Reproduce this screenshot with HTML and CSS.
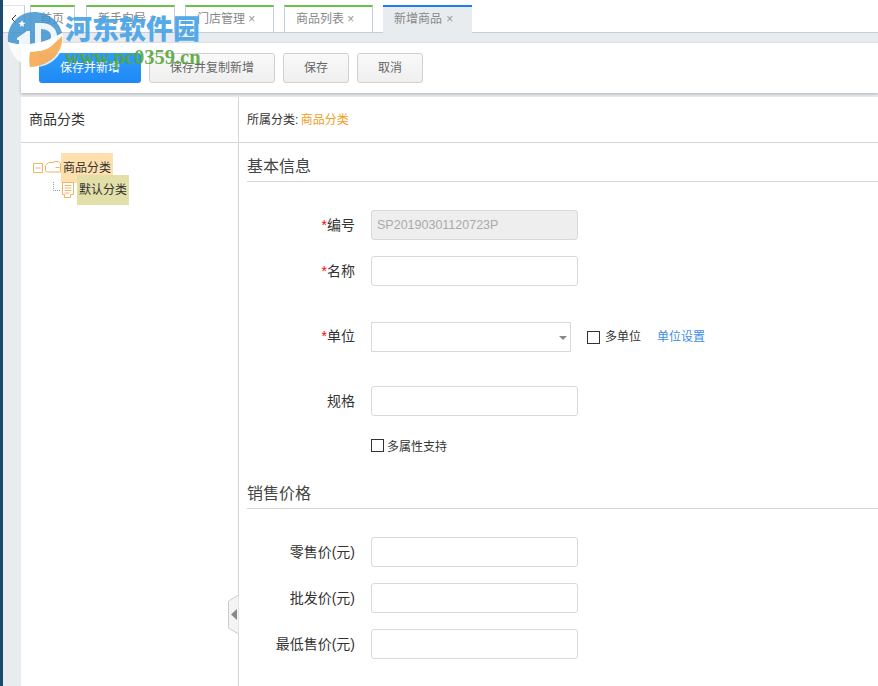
FILE: index.html
```html
<!DOCTYPE html>
<html lang="zh-CN">
<head>
    <meta charset="UTF-8">
    <title>新增商品</title>
    <link rel="stylesheet" href="styles.css">
</head>
<body>
    <div class="side-strip"></div>
    <div class="main">
        <div class="tabbar">
            <div class="tab-back">
                <svg width="6" height="10" viewBox="0 0 6 10"><path d="M5 1 1 5l4 4" fill="none" stroke="#333"/></svg>
            </div>
            <div class="tab tab-home">首页</div>
            <div class="tab tab-first">新手向导 <span class="tab-x">×</span></div>
            <div class="tab">门店管理 <span class="tab-x">×</span></div>
            <div class="tab">商品列表 <span class="tab-x">×</span></div>
            <div class="tab tab-active">新增商品 <span class="tab-x">×</span></div>
        </div>
        <div class="toolbar">
            <button class="btn btn-primary">保存并新增</button>
            <button class="btn btn-wide">保存并复制新增</button>
            <button class="btn btn-small">保存</button>
            <button class="btn btn-small">取消</button>
        </div>
        <div class="content">
            <div class="tree-panel">
                <div class="tree-head">商品分类</div>
                <div class="tree">
                    <div class="tree-row">
                        <svg class="tree-toggle" width="10" height="10" viewBox="0 0 10 10"><path d="M.5.5h9v9h-9zM2.500 5h5" fill="none" stroke="#f0b468"/></svg>
                        <svg class="tree-folder" width="16" height="12" viewBox="0 0 16 12"><path d="M.5 4.500 3.500 1.500H8L10 .5H13.500L15.500 2.500V11H2.500Q.5 11 .5 9ZM10.500 6.500h4" fill="none" stroke="#f0b468"/></svg>
                        <span class="tree-label tree-label-parent">商品分类</span>
                    </div>
                    <div class="tree-row tree-row-child">
                        <svg class="tree-dots" width="8" height="9" viewBox="0 0 8 9"><path d="M.5 0v8.500H8" fill="none" stroke="#999" stroke-dasharray="1 1"/></svg>
                        <svg class="tree-doc" width="12" height="16" viewBox="0 0 12 16"><path d="M.5.5h11v12h-3v3h-6v-3h-2zM2.500 3.500h7M2.500 6h7M2.500 8.500h7M2.500 11h5" fill="none" stroke="#f0b468"/></svg>
                        <span class="tree-label tree-label-child">默认分类</span>
                    </div>
                </div>
            </div>
            <div class="form-panel">
                <div class="crumb">所属分类: <span class="crumb-link">商品分类</span></div>
                <div class="form-body">
                    <h3 class="section-title">基本信息</h3>
                    <div class="form-row row-code">
                        <label class="form-label"><i>*</i>编号</label>
                        <div class="input input-disabled">SP20190301120723P</div>
                    </div>
                    <div class="form-row row-name">
                        <label class="form-label"><i>*</i>名称</label>
                        <div class="input"></div>
                    </div>
                    <div class="form-row row-unit">
                        <label class="form-label"><i>*</i>单位</label>
                        <div class="select"><span class="select-arrow"></span></div>
                        <span class="check"></span>
                        <span class="check-text">多单位</span>
                        <a class="unit-link">单位设置</a>
                    </div>
                    <div class="form-row row-spec">
                        <label class="form-label">规格</label>
                        <div class="input"></div>
                    </div>
                    <div class="form-row row-attr">
                        <span class="check"></span>
                        <span class="check-text check-text-small">多属性支持</span>
                    </div>
                    <h3 class="section-title section-price">销售价格</h3>
                    <div class="form-row row-retail">
                        <label class="form-label">零售价(元)</label>
                        <div class="input"></div>
                    </div>
                    <div class="form-row row-price">
                        <label class="form-label">批发价(元)</label>
                        <div class="input"></div>
                    </div>
                    <div class="form-row row-price">
                        <label class="form-label">最低售价(元)</label>
                        <div class="input"></div>
                    </div>
                </div>
            </div>
            <svg class="collapse" width="11" height="42" viewBox="0 0 11 42"><path d="M10.500 1 .5 7v27l10 6" fill="#f4f4f4" stroke="#ccc"/><path d="M9 15v11l-6-5.500z" fill="#888"/></svg>
        </div>
    </div>

    <!-- site watermark over the top left corner -->
    <div class="watermark">
        <svg class="wm-logo" width="70" height="70" viewBox="0 0 70 70">
            <path d="M8 42C6 25 19 12 34 12c14 0 25 9 28 21C48 42 25 48 8 42z" fill="#3f94d0" opacity=".85"/>
            <path d="M8 42c17 6 40 0 54-9 1 3 1 5 1 8 0 14-12 26-28 26C21 67 11 56 8 42z" fill="#fff" opacity=".8"/>
            <path d="M62 36c2 14-10 30-32 31-1-4-1-10 0-15C43 52 54 45 62 36z" fill="#f5a852" opacity=".9"/>
            <path d="M17 38 27 31h3v16H19v-7l-2 0z" fill="#fff" opacity=".9"/>
            <path d="M35 23h6c10 0 16 6 16 13 0 8-8 13-16 15h-6zM41 29v16c6-1 10-4 10-9 0-4-4-7-10-7z" fill="#fff" fill-rule="evenodd" opacity=".9"/>
            <path d="m22 20 1 2.500 2.500.5-2 1.500.5 2.500-2-1.500-2 1.500.5-2.500-2-1.500 2.500-.5z" fill="#fff"/>
        </svg>
        <div class="wm-name">河东软件园</div>
        <div class="wm-url">www.pc0359.cn</div>
    </div>
</body>
</html>
```
FILE: styles.css
```css
* {
    box-sizing: border-box;
}
html, body {
    height: 100%;
}
body {
    margin: 0;
    display: flex;
    height: 686px;
    overflow: hidden;
    font-family: "Liberation Sans", "Noto Sans CJK SC", sans-serif;
    font-size: 14px;
    color: #333;
    background-color: #fff;
}
.side-strip {
    width: 3px;
    background-color: #1b4b6f;
    flex-shrink: 0;
}
.main {
    flex: 1;
    min-width: 0;
    display: flex;
    flex-direction: column;
    background-color: #e8ecef;
}
.tabbar {
    height: 33px;
    display: flex;
    align-items: flex-end;
    background-color: #fff;
    border-bottom: 1px solid #c3cddd;
}
.tab-back {
    width: 22px;
    height: 27px;
    margin-right: 5px;
    display: flex;
    align-items: center;
    justify-content: center;
    border-right: 1px solid #c3cddd;
    border-top: 1px solid #dfe3ea;
}
.tab {
    width: 89px;
    height: 27px;
    margin-right: 10px;
    padding-left: 11px;
    border: 1px solid #c3cddd;
    border-top: 2px solid #6cbf4b;
    border-bottom: none;
    font-size: 12px;
    line-height: 24px;
    color: #888;
    background-color: #fff;
}
.tab-home {
    width: 45px;
    margin-right: 11px;
    padding-left: 9px;
}
.tab-active {
    border: none;
    border-top: 2px solid #1e80f0;
    height: 28px;
    margin-bottom: -1px;
    padding-left: 11px;
    background-color: #e8ecef;
}
.tab-x {
    color: #999;
}
.tab-active .tab-x {
    margin-left: 1px;
}
.toolbar {
    margin: 10px 0 0 18px;
    height: 50px;
    padding: 10px 0 0 18px;
    display: flex;
    gap: 8px;
    background-color: #fff;
    box-shadow: 0 1px 3px rgba(0, 0, 0, 0.25);
}
.btn {
    height: 30px;
    width: 66px;
    padding: 0 0 3px;
    border: 1px solid #d0d0d0;
    border-radius: 3px;
    font-family: inherit;
    font-size: 12px;
    color: #666;
    background: linear-gradient(#f9f9f9, #efefef);
}
.btn-primary {
    width: 102px;
    border: none;
    color: #fff;
    background: linear-gradient(#2e9dfb, #1e88f5);
}
.btn-wide {
    width: 126px;
}
.content {
    position: relative;
    flex: 1;
    margin: 4px 0 0 18px;
    display: flex;
    background-color: #fff;
}
.tree-panel {
    width: 218px;
    border-right: 1px solid #d6d6d6;
    flex-shrink: 0;
}
.tree-head {
    height: 46px;
    padding: 0 0 0 8px;
    border-bottom: 1px solid #d6d6d6;
    line-height: 45px;
    color: #333;
}
.tree {
    padding: 14px 0 0 12px;
}
.tree-row {
    height: 22px;
    display: flex;
    align-items: center;
}
.tree-toggle {
    flex-shrink: 0;
}
.tree-folder {
    margin: -2px 0 0 2px;
}
.tree-label {
    height: 30px;
    padding: 0 2px;
    font-size: 12px;
    line-height: 30px;
    color: #333;
}
.tree-label-parent {
    background-color: #fedfae;
}
.tree-label-child {
    position: relative;
    background-color: #e3dfa9;
}
.tree-row-child {
    padding-left: 20px;
}
.tree-dots {
    margin-bottom: 7px;
    flex-shrink: 0;
}
.tree-doc {
    margin: 0 3px 0 1px;
    flex-shrink: 0;
}
.form-panel {
    flex: 1;
    min-width: 0;
}
.crumb {
    height: 46px;
    padding-left: 8px;
    border-bottom: 1px solid #d6d6d6;
    font-size: 12px;
    line-height: 47px;
}
.crumb-link {
    margin-left: -1px;
    color: #f0a020;
}
.form-body {
    padding-left: 8px;
}
.section-title {
    margin: 0;
    height: 39px;
    padding-top: 12px;
    border-bottom: 1px solid #d6d6d6;
    font-size: 16px;
    font-weight: normal;
    line-height: 23px;
    color: #444;
}
.form-row {
    height: 30px;
    display: flex;
    align-items: center;
}
.form-label {
    width: 108px;
    margin-right: 16px;
    padding-bottom: 2px;
    text-align: right;
    color: #333;
}
.form-label i {
    font-style: normal;
    color: #f00;
}
.row-code {
    margin-top: 28px;
}
.row-name {
    margin-top: 16px;
}
.row-unit {
    margin-top: 36px;
}
.row-unit .form-label {
    padding-bottom: 4px;
}
.row-spec {
    margin-top: 34px;
}
.row-attr {
    height: 14px;
    margin-top: 22px;
    padding-left: 124px;
}
.section-price {
    margin-top: 18px;
}
.row-retail {
    margin-top: 28px;
}
.row-price {
    margin-top: 16px;
}
.input {
    width: 207px;
    height: 30px;
    border: 1px solid #d9d9d9;
    border-radius: 3px;
    background-color: #fff;
}
.input-disabled {
    padding-left: 5px;
    font-size: 12.5px;
    line-height: 28px;
    color: #aaa;
    background-color: #eee;
}
.select {
    position: relative;
    width: 200px;
    height: 30px;
    border: 1px solid #d9d9d9;
    background-color: #fff;
}
.select-arrow {
    position: absolute;
    right: 3px;
    top: 13px;
    border: 4px solid transparent;
    border-top: 4px solid #888;
    border-bottom: none;
}
.check {
    width: 13px;
    height: 13px;
    margin-left: 16px;
    border: 1px solid #333;
    flex-shrink: 0;
}
.row-attr .check {
    margin-left: 0;
}
.check-text {
    margin-left: 5px;
    padding-bottom: 4px;
    font-size: 12px;
    color: #333;
}
.check-text-small {
    margin-left: 3px;
    padding-bottom: 0;
}
.unit-link {
    margin-left: 16px;
    padding-bottom: 4px;
    font-size: 12px;
    color: #3a8ee6;
}
.collapse {
    position: absolute;
    left: 207px;
    top: 497px;
}
.watermark {
    position: absolute;
    left: 0;
    top: 0;
    width: 210px;
    height: 70px;
    pointer-events: none;
}
.wm-logo {
    position: absolute;
    left: 0;
    top: 0;
}
.wm-name {
    position: absolute;
    left: 65px;
    top: 11px;
    font-family: "Noto Sans CJK SC", sans-serif;
    font-size: 27px;
    font-weight: 900;
    line-height: 34px;
    white-space: nowrap;
    color: #4ea6e6;
    opacity: 0.95;
}
.wm-url {
    position: absolute;
    left: 65px;
    top: 46px;
    font-family: "Liberation Serif", serif;
    font-size: 20.5px;
    font-weight: bold;
    line-height: 22px;
    white-space: nowrap;
    color: #5aa63c;
    opacity: 0.9;
}
```
